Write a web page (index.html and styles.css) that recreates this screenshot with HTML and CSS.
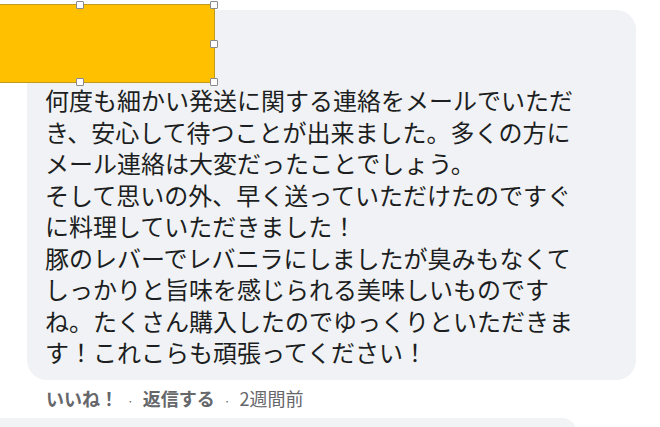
FILE: index.html
```html
<!DOCTYPE html>
<html lang="ja">
<head>
<meta charset="utf-8">
<link rel="stylesheet" href="styles.css">
</head>
<body>
<div class="page">
  <div class="comment">
    <div class="bubble">
      <div class="name"></div>
      <div class="text">何度も細かい発送に関する連絡をメールでいただ<br>き、安心して待つことが出来ました。多くの方に<br>メール連絡は大変だったことでしょう。<br>そして思いの外、早く送っていただけたのですぐ<br>に料理していただきました！<br>豚のレバーでレバニラにしましたが臭みもなくて<br>しっかりと旨味を感じられる美味しいものです<br>ね。たくさん購入したのでゆっくりといただきま<br>す！これこらも頑張ってください！</div>
    </div>
    <div class="actions"><span class="act">いいね！</span><span class="dot">·</span><span class="act">返信する</span><span class="dot">·</span><span class="time">2週間前</span></div>
  </div>
  <div class="next"></div>
  <div class="mask">
    <span class="handle h1"></span>
    <span class="handle h2"></span>
    <span class="handle h3"></span>
    <span class="handle h4"></span>
    <span class="handle h5"></span>
  </div>
</div>
</body>
</html>
```
FILE: styles.css
```css
html, body {
  margin: 0;
  padding: 0;
  background: #ffffff;
  overflow: hidden;
}
body {
  font-family: "Noto Sans CJK JP", "Noto Sans", sans-serif;
  width: 660px;
  height: 427px;
}
.page {
  position: relative;
  padding-top: 10px;
}
.comment {
  margin-left: 27px;
  width: 609px;
}
.bubble {
  background: #f0f2f5;
  border-radius: 20px;
  padding: 0 18px 12px;
}
.name {
  height: 74px;
}
.text {
  font-size: 24px;
  line-height: 31.5px;
  color: #1c1e21;
  white-space: nowrap;
}
.actions {
  margin-top: 7px;
  padding-left: 19px;
  font-size: 18px;
  line-height: 22px;
  color: #65676b;
  display: flex;
  align-items: baseline;
}
.act {
  font-weight: 700;
}
.dot {
  font-size: 12px;
  margin: 0 9px;
}
.time {
  font-size: 18px;
  font-weight: 400;
}
.next {
  margin-top: 6px;
  margin-left: -30px;
  width: 607px;
  height: 30px;
  background: #f2f3f5;
  border-radius: 18px;
}
.mask {
  position: absolute;
  left: -2px;
  top: 4px;
  width: 217px;
  height: 79px;
  box-sizing: border-box;
  background: #ffc000;
  border: 1px solid #c49a1c;
}
.handle {
  position: absolute;
  width: 6px;
  height: 6px;
  background: #ffffff;
  border: 1px solid #8a8a8a;
  border-radius: 1px;
}
.h1 { left: 77px; top: -4px; }
.h2 { right: -4px; top: -4px; }
.h3 { right: -4px; top: 35px; }
.h4 { left: 77px; bottom: -4px; }
.h5 { right: -4px; bottom: -4px; }
```
